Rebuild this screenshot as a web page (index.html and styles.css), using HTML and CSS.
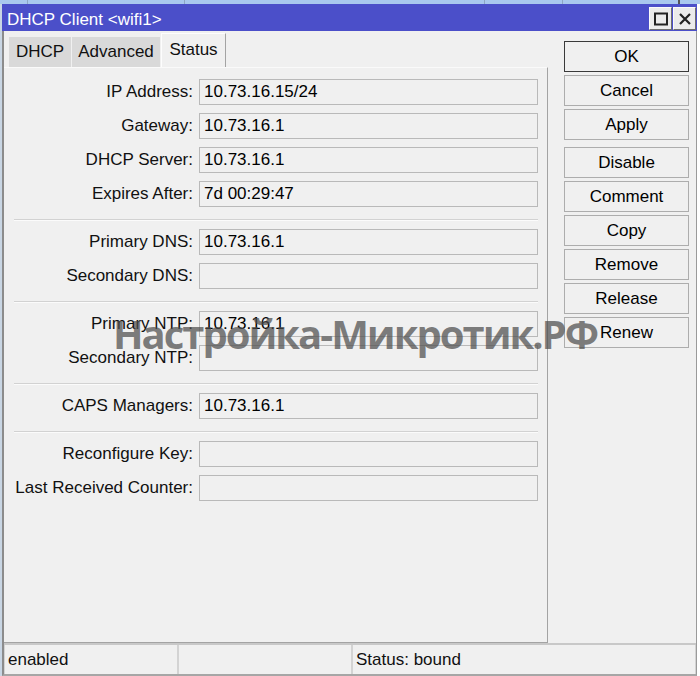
FILE: index.html
```html
<!DOCTYPE html>
<html lang="en">
<head>
  <meta charset="UTF-8">
  <meta name="viewport" content="width=device-width, initial-scale=1.0">
  <title>DHCP Client &lt;wifi1&gt;</title>
  <link rel="stylesheet" href="styles.css">
</head>
<body>
  <div class="desk">
    <span class="desk-cell w1"></span>
    <span class="desk-cell w2"></span>
    <span class="desk-cell w3"></span>
    <span class="desk-cell w4"></span>
    <span class="desk-cell w5"></span>
  </div>

  <div class="window">
    <div class="titlebar">
      <span class="title">DHCP Client &lt;wifi1&gt;</span>
      <div class="win-controls">
        <span class="win-btn">
          <svg width="14" height="14" viewBox="0 0 14 14">
            <rect x="1" y="1.5" width="12" height="11" fill="none" stroke="#222" stroke-width="2"/>
          </svg>
        </span>
        <span class="win-btn">
          <svg width="14" height="14" viewBox="0 0 14 14">
            <path d="M2 2 L12 12 M12 2 L2 12" stroke="#222" stroke-width="2.2"/>
          </svg>
        </span>
      </div>
    </div>

    <div class="frame">
      <div class="content">
        <div class="main">
          <div class="tabs">
            <div class="tab tab-dhcp">DHCP</div>
            <div class="tab tab-adv">Advanced</div>
            <div class="tab tab-status active">Status</div>
          </div>

          <div class="panel">
            <div class="group">
              <div class="row"><label>IP Address:</label><div class="field">10.73.16.15/24</div></div>
              <div class="row"><label>Gateway:</label><div class="field">10.73.16.1</div></div>
              <div class="row"><label>DHCP Server:</label><div class="field">10.73.16.1</div></div>
              <div class="row"><label>Expires After:</label><div class="field">7d 00:29:47</div></div>
            </div>
            <div class="sep"></div>
            <div class="group">
              <div class="row"><label>Primary DNS:</label><div class="field">10.73.16.1</div></div>
              <div class="row"><label>Secondary DNS:</label><div class="field"></div></div>
            </div>
            <div class="sep"></div>
            <div class="group">
              <div class="row"><label>Primary NTP:</label><div class="field">10.73.16.1</div></div>
              <div class="row"><label>Secondary NTP:</label><div class="field"></div></div>
            </div>
            <div class="sep"></div>
            <div class="group">
              <div class="row"><label>CAPS Managers:</label><div class="field">10.73.16.1</div></div>
            </div>
            <div class="sep"></div>
            <div class="group">
              <div class="row"><label>Reconfigure Key:</label><div class="field"></div></div>
              <div class="row"><label>Last Received Counter:</label><div class="field"></div></div>
            </div>
          </div>
        </div>

        <div class="side">
          <button class="btn default">OK</button>
          <button class="btn">Cancel</button>
          <button class="btn">Apply</button>
          <button class="btn spaced">Disable</button>
          <button class="btn">Comment</button>
          <button class="btn">Copy</button>
          <button class="btn">Remove</button>
          <button class="btn">Release</button>
          <button class="btn">Renew</button>
        </div>
      </div>

      <div class="statusbar">
        <div class="seg seg-short">enabled</div>
        <div class="seg seg-short"></div>
        <div class="seg seg-wide">Status: bound</div>
      </div>
    </div>

    <div class="watermark">Настройка-Микротик.РФ</div>
  </div>
</body>
</html>
```

FILE: styles.css
```css
/* Reset and Basic Styling */
* {
  margin: 0;
  padding: 0;
  box-sizing: border-box;
}
body {
  width: 700px;
  height: 676px;
  overflow: hidden;
  background: linear-gradient(90deg, #c9d6e4 0, #c9d6e4 2px, #ffffff 2px);
  font-family: 'Liberation Sans', Arial, sans-serif;
  font-size: 17px;
  color: #111;
}

/* Strip of the desktop behind the window */
.desk {
  display: flex;
  height: 4px;
  background: #a9c8ee;
}
.desk-cell {
  height: 4px;
  border-right: 1px solid #8da6c4;
}
.w1 { width: 28px; }
.w2 { width: 157px; }
.w3 { width: 300px; }
.w4 { width: 78px; }
.w5 { width: 117px; border-right: 2px solid #555; }

/* Window */
.window {
  position: relative;
  display: flex;
  flex-direction: column;
  width: 695px;
  height: 672px;
  margin-left: 2px;
}

/* Title bar */
.titlebar {
  display: flex;
  height: 27px;
  background: #4b4fc9;
}
.title {
  padding: 6px 0 0 5px;
  line-height: 19px;
  color: #fff;
}
.win-controls {
  display: flex;
  gap: 1px;
  margin-left: auto;
  padding: 3px 1px 1px 0;
}
.win-btn {
  display: flex;
  align-items: center;
  justify-content: center;
  width: 23px;
  height: 23px;
  background: #ebebeb;
  border: 1px solid;
  border-color: #fafafa #6f6f6f #6f6f6f #fafafa;
}

/* Frame below the title */
.frame {
  flex: 1;
  display: flex;
  flex-direction: column;
  background: #f0f0f0;
  border-left: 2px solid #8c8c8c;
  border-right: 1px solid #9a9a9a;
  border-bottom: 2px solid #a6a6a6;
}
.content {
  flex: 1;
  display: flex;
}
.main {
  display: flex;
  flex-direction: column;
  width: 544px;
}

/* Tabs */
.tabs {
  display: flex;
  align-items: flex-end;
  gap: 1px;
  height: 36px;
  padding-left: 5px;
}
.tab {
  height: 30px;
  line-height: 30px;
  text-align: center;
  background: #d9d9d9;
}
.tab-dhcp { width: 62px; }
.tab-adv { width: 88px; }
.tab-status { width: 65px; }
.tab.active {
  height: 34px;
  line-height: 32px;
  background: #f0f0f0;
  border-top: 1px solid #fdfdfd;
  border-left: 1px solid #fdfdfd;
  border-right: 1px solid #a3a3a3;
}

/* Status panel */
.panel {
  flex: 1;
  padding-top: 11px;
  border-top: 1px solid #fafafa;
  border-right: 1px solid #a3a3a3;
  border-bottom: 1px solid #a3a3a3;
}
.group {
  display: flex;
  flex-direction: column;
  gap: 8px;
}
.row {
  display: flex;
  align-items: center;
  height: 26px;
}
.row label {
  width: 189px;
  text-align: right;
}
.field {
  width: 339px;
  height: 26px;
  margin-left: 6px;
  padding-left: 4px;
  line-height: 24px;
  color: #000;
  border: 1px solid #b9b9b9;
}
.sep {
  margin: 12px 9px 8px 10px;
  border-top: 1px solid #d2d2d2;
  border-bottom: 1px solid #fbfbfb;
}

/* Button column */
.side {
  display: flex;
  flex-direction: column;
  gap: 3px;
  width: 125px;
  margin-left: 16px;
  padding-top: 10px;
}
.btn {
  height: 31px;
  background: #f0f0f0;
  border: 1px solid #adadad;
  font-family: 'Liberation Sans', Arial, sans-serif;
  font-size: 17px;
  color: #000;
}
.btn.default {
  border-color: #3a3a3a;
}
.btn.spaced {
  margin-top: 4px;
}

/* Status bar */
.statusbar {
  display: flex;
  gap: 2px;
  height: 31px;
  padding: 0 1px;
  background: #d3d3d3;
  border-top: 2px solid #c8c8c8;
}
.seg {
  padding-left: 3px;
  line-height: 29px;
  background: #f0f0f0;
}
.seg-short { width: 172px; }
.seg-wide { flex: 1; }

/* Watermark over the form */
.watermark {
  position: absolute;
  left: 111px;
  top: 310px;
  font-family: 'Open Sans', sans-serif;
  font-weight: 700;
  font-size: 40px;
  letter-spacing: -2px;
  line-height: 1;
  color: rgba(78, 78, 78, 0.72);
  white-space: nowrap;
  pointer-events: none;
}
```
